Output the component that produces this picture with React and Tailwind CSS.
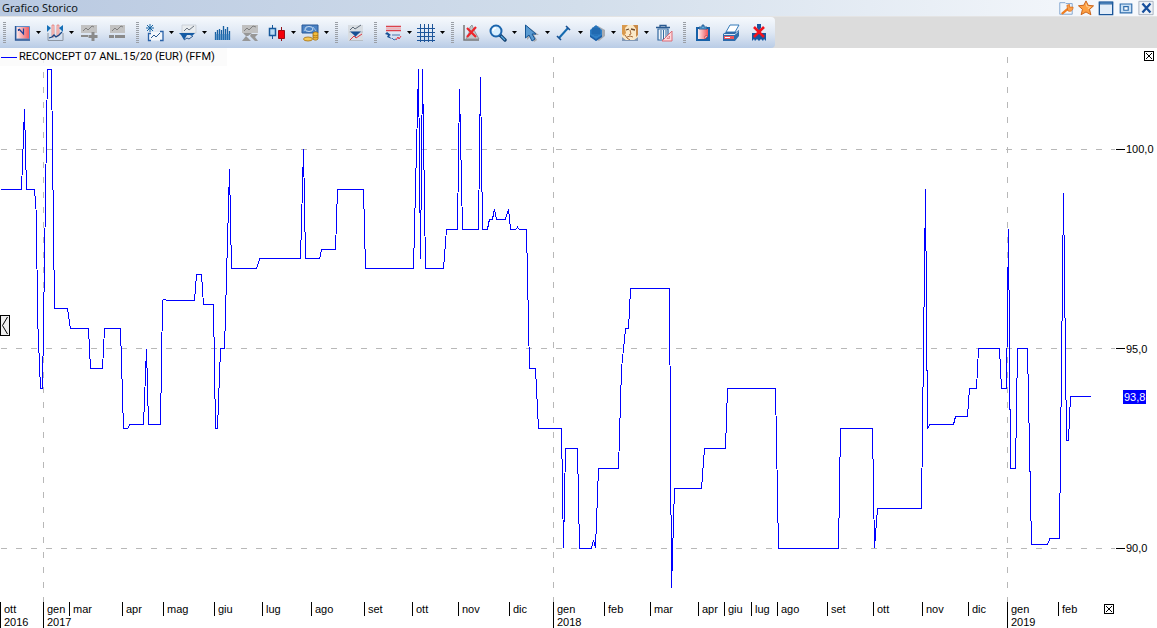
import { clsx } from 'clsx';

const VIEW_W = 1157;
const VIEW_H = 580;
const AXIS_TOP = 554;

const pctX = (x) => `${(x / VIEW_W) * 100}%`;
const pctY = (y) => `${(y / VIEW_H) * 100}%`;
const priceY = (price) => 101.25 + (100 - price) * 39.9;

// [position on the time axis, price]
const quotes = [
  [1, 99], [21.5, 99], [24.5, 101], [26.5, 99], [34.5, 99], [36, 98.5], [38, 95.5], [40.5, 94], [42.5, 94],
  [47.5, 102], [51.5, 102], [54.5, 96], [67.5, 96], [70.5, 95.5], [88.5, 95.5], [90.5, 94.5], [102.5, 94.5],
  [104.5, 95.5], [120.5, 95.5], [123.5, 93], [127.5, 93], [130, 93.1], [143.5, 93.1], [146.5, 95],
  [148.5, 93.1], [160.5, 93.1], [162.5, 96.2], [164, 96.25], [167, 96.2], [194.5, 96.2], [196.5, 96.87],
  [201.5, 96.87], [203.5, 96.1], [213.5, 96.1], [215.5, 93], [217.5, 93], [220.5, 95], [224.5, 95],
  [229.5, 99.5], [231.5, 97], [256.5, 97], [259.5, 97.25], [300.5, 97.25], [303.5, 100], [305.5, 97.25],
  [319.5, 97.25], [321.5, 97.48], [335.5, 97.48], [337.5, 99], [363.5, 99], [365.5, 97], [413.5, 97],
  [418.5, 102], [420.5, 97.25], [422.5, 102], [425.5, 97], [443.5, 97], [446.5, 98], [457.5, 98],
  [459.5, 101.5], [462.5, 98], [478.5, 98], [480.5, 101.8], [482.5, 98], [487.5, 98], [489.5, 98.25],
  [492.5, 98.25], [494.5, 98.5], [496.5, 98.25], [505.5, 98.25], [508.5, 98.5], [510.5, 98], [516, 98],
  [517.5, 98.05], [519, 98], [526.5, 98], [529.5, 94.5], [535.5, 94.5], [538.5, 93], [561.5, 93],
  [563.5, 90], [565.5, 92.5], [577.5, 92.5], [579.5, 90], [591.5, 90], [593.5, 90.2], [595.5, 90],
  [598.5, 92], [618.5, 92], [621.5, 94.5], [625.5, 95.5], [628.5, 95.5], [630.5, 96.5], [669.5, 96.5],
  [671.5, 89], [674.5, 91.5], [701.5, 91.5], [704.5, 92.5], [725.5, 92.5], [727.5, 94], [775.5, 94],
  [778.5, 90], [838.5, 90], [840.5, 93], [872.5, 93], [874.5, 90], [877.5, 91], [921.5, 91], [925.5, 99],
  [927.5, 93], [930, 93.1], [953.5, 93.1], [955.5, 93.3], [967.5, 93.3], [969.5, 94], [976.5, 94],
  [978.5, 95], [999.5, 95], [1001.5, 94], [1006.5, 94], [1008.5, 98], [1010.5, 92], [1015.5, 92],
  [1017.5, 95], [1027.5, 95], [1031.5, 90.1], [1047.5, 90.1], [1050, 90.25], [1059.5, 90.25],
  [1063.5, 98.9], [1066.5, 92.7], [1068.5, 92.7], [1070.5, 93.8], [1091, 93.8],
];

const months = [
  { x: 0, label: 'ott', year: '2016' },
  { x: 43, label: 'gen', year: '2017', grid: true },
  { x: 69, label: 'mar' },
  { x: 122, label: 'apr' },
  { x: 163, label: 'mag' },
  { x: 214, label: 'giu' },
  { x: 262, label: 'lug' },
  { x: 311, label: 'ago' },
  { x: 364, label: 'set' },
  { x: 412, label: 'ott' },
  { x: 458, label: 'nov' },
  { x: 509, label: 'dic' },
  { x: 553, label: 'gen', year: '2018', grid: true },
  { x: 604, label: 'feb' },
  { x: 650, label: 'mar' },
  { x: 698, label: 'apr' },
  { x: 724, label: 'giu' },
  { x: 751, label: 'lug' },
  { x: 777, label: 'ago' },
  { x: 827, label: 'set' },
  { x: 873, label: 'ott' },
  { x: 922, label: 'nov' },
  { x: 968, label: 'dic' },
  { x: 1007, label: 'gen', year: '2019', grid: true },
  { x: 1058, label: 'feb' },
];

const levels = [
  { price: 100, label: '100,0' },
  { price: 95, label: '95,0' },
  { price: 90, label: '90,0' },
];

function Icon({ children, size = 'w-[18px] h-[18px]' }) {
  return (
    <svg viewBox="0 0 18 18" className={clsx('flex-shrink-0', size)} fill="none" aria-hidden="true">
      {children}
    </svg>
  );
}

const icons = {
  chartType: (
    <Icon>
      <defs>
        <linearGradient id="redSide" x1="0" x2="1" y1="0" y2="0">
          <stop offset="0" stopColor="#fdeeee" />
          <stop offset="1" stopColor="#f0555a" />
        </linearGradient>
      </defs>
      <path d="M3 2.500h13.500v12.500H3z" fill="url(#redSide)" stroke="#5d8cc8" />
      <path d="M2.500 2v14H17" stroke="#2a5594" strokeWidth="1.3" />
      <path d="M5.500 5v2M6 5l4.500 5V4.500" stroke="#1b3f96" strokeWidth="1.2" />
    </Icon>
  ),
  compress: (
    <Icon>
      <path d="M6 1h2v12H6zM11 1h2v11h-2z" fill="#fbd3d0" stroke="#e0716e" strokeWidth=".7" />
      <path d="M1 1l4 3-4 4zM17 1l-4 3 4 4z" fill="#1670b8" />
      <path d="M2 9v7.500h15V9" stroke="#8d96a2" />
      <path d="M3 14l3-1 2-2 2 2 3-2 3-3" stroke="#174786" strokeWidth="1.3" />
    </Icon>
  ),
  addIndicator: (
    <Icon>
      <path d="M1 1h16v8H1z" fill="#c2c2c2" />
      <path d="M3 7l3-3 2 2 4-4 2 1" stroke="#808080" />
      <path d="M1 11h7v2H1zM11.500 8h3v3h3v3h-3v3h-3v-3h-3v-3h3z" fill="#8a8a8a" />
    </Icon>
  ),
  removeIndicator: (
    <Icon>
      <path d="M2 1h15v8H2z" fill="#c2c2c2" />
      <path d="M4 7l3-3 2 2 4-4 2 1" stroke="#808080" />
      <path d="M1 11h5v3H1zM7 11h10v3H7z" fill="#8a8a8a" />
    </Icon>
  ),
  newChart: (
    <Icon>
      <path d="M4 0v8M0 4h8M1 1l6 6M7 1L1 7" stroke="#1564a5" />
      <path d="M3 8h14v8.500H3z" fill="#f2f6fb" />
      <path d="M5 9.500H2.500v7H5M14 7.500h3v9h-3" stroke="#2a62a8" strokeWidth="1.3" />
      <path d="M5 14l3-3 2 2 4-4" stroke="#27568f" />
    </Icon>
  ),
  replaceChart: (
    <Icon>
      <path d="M3 1h14v8H3z" fill="#e8ecef" stroke="#c2c9d1" strokeWidth=".7" />
      <path d="M5 7l3-3 2 2 5-4" stroke="#6c7682" />
      <path d="M0 9h16l-3 3-2-1H8l-3 5-3-5z" fill="#155ba4" />
      <path d="M5 16l3-2 2 1 4-3" stroke="#27568f" />
    </Icon>
  ),
  volume: (
    <Icon>
      <path
        d="M2.500 16V8M4.500 16V6M6.500 16V5M8.500 16V6M10.500 16V2M12.500 16V5M14.500 16V3M16.500 16V7"
        stroke="#1760a2"
        strokeWidth="1.3"
      />
      <path d="M2 16V10h15v6z" fill="#2c78ba" opacity=".5" />
    </Icon>
  ),
  swap: (
    <Icon>
      <path d="M1 1h16v8H1z" fill="#c0c0c0" />
      <path d="M3 7l3-3 2 2 4-4 3 1" stroke="#808080" />
      <path d="M2 9h9l-4 3H5zM1 17l4-5 5 5zM10 10h7l-3 3 3 4h-3l-5-5z" fill="#979797" />
    </Icon>
  ),
  candles: (
    <Icon>
      <path d="M4.500 1v14" stroke="#17599c" />
      <path d="M1.500 4.500h6v7h-6z" fill="#b9dbf4" stroke="#17599c" strokeWidth="1.5" />
      <path d="M13.500 3v14" stroke="#8f1018" />
      <path d="M10.500 6.500h6v8h-6z" fill="#f40009" stroke="#980f15" />
    </Icon>
  ),
  currency: (
    <Icon>
      <path d="M1 1h16v8H1z" fill="#4a82c4" stroke="#2a5a9a" />
      <ellipse cx="8" cy="5" rx="4" ry="2.5" stroke="#c6dcf4" />
      <path d="M3 7l3-4M12 3l3 4" stroke="#a2c3e5" />
      <path d="M12 9c1-1.500 4-1.500 5 0v6c-1 1.500-4 1.500-5 0z" fill="#f3bd3d" stroke="#a56f12" strokeWidth=".8" />
      <path d="M12 11c1 1 4 1 5 0M12 13c1 1 4 1 5 0" stroke="#a56f12" strokeWidth=".8" />
      <ellipse cx="7" cy="15" rx="4.500" ry="2" fill="#f5c958" stroke="#a56f12" strokeWidth=".8" />
    </Icon>
  ),
  compare: (
    <Icon>
      <path d="M2 1h15v16H2z" fill="#d8dde2" />
      <path d="M3 8h14M3 16.500h14" stroke="#aeb5bd" strokeWidth=".8" />
      <path d="M4 6l3-3 2 2 6-4" stroke="#5d6a78" />
      <path d="M4 7.500h11L11 11l-1.500 2L8 11z" fill="#174f94" />
      <path d="M4 16l4-4 2 2 6-4" stroke="#df3440" />
    </Icon>
  ),
  studies: (
    <Icon>
      <path d="M2 2.500h15M2 6.500h15" stroke="#db424b" strokeWidth="1.3" />
      <path d="M2 4.500h15" stroke="#f3b4b6" />
      <path d="M3 8l4 3-2 1 3 3-5-2 1-2-3-1z" fill="#174f94" />
      <path d="M8 11h8" stroke="#4f79ad" />
      <path d="M8 14l2 2 2-1" stroke="#3971ae" />
      <path d="M12 16l2-3 1 2 2-3" stroke="#e43742" />
    </Icon>
  ),
  grid: (
    <Icon>
      <path
        d="M0 4.500h18M0 8.500h18M0 12.500h18M0 16.500h18M3.500 0v18M7.500 0v18M11.500 0v18M15.500 0v18"
        stroke="#1d559a"
        shapeRendering="crispEdges"
      />
    </Icon>
  ),
  clearTools: (
    <Icon>
      <path d="M2 1v15h15" stroke="#777" strokeWidth="1.5" />
      <path d="M4 15l3-6 1-6 2-2 2 5 5 9z" fill="#c4c7ca" stroke="#85898c" strokeWidth=".8" />
      <path d="M5 4l9 9M14 3l-9 10" stroke="#ed252a" strokeWidth="2.2" />
    </Icon>
  ),
  zoom: (
    <Icon>
      <path d="M11 11l5 5" stroke="#12406f" strokeWidth="3.400" strokeLinecap="round" />
      <path d="M12 12l4 4" stroke="#56a9e1" strokeWidth="1.2" />
      <circle cx="7" cy="7" r="5.5" fill="#d7efff" stroke="#1b65ad" strokeWidth="2" />
      <path d="M4 7c0-2 1-3 3-3" stroke="#fff" strokeWidth="1.5" />
    </Icon>
  ),
  cursor: (
    <Icon>
      <path d="M5 2v14l4-4 3 6 3-2-3-5h5z" fill="#a6a8ad" />
      <path d="M3.500 1v13l3.500-3 3 6 3-2-3-5h4z" fill="#5a9bd2" stroke="#165594" />
    </Icon>
  ),
  trendLine: (
    <Icon>
      <path d="M4 14L13 4" stroke="#146ab0" strokeWidth="2" />
      <path d="M2 12l4 4M11 2l4 4" stroke="#174f91" strokeWidth="1.6" />
    </Icon>
  ),
  shape: (
    <Icon>
      <path d="M10 2l7 4v6l-6 5-5-2z" fill="#a7abb1" />
      <path d="M8 1l6 5v6l-6 5-6-5V6z" fill="#2f7fc6" />
      <path d="M2 11l6 4 6-4v2l-6 4-6-4z" fill="#1b5fa8" />
      <path d="M4 5h8M3 7h10M3 9h10M5 3v8M7 2v10M9 2v10M11 4v7" stroke="#15599f" strokeWidth=".6" />
    </Icon>
  ),
  portrait: (
    <Icon>
      <path d="M1 1h16v15H1z" fill="#fbe9c8" />
      <path d="M1 1h6L4 4l1 5-2 3-2-2z" fill="#d99a4e" />
      <path d="M12 1h5v10l-2 2 0-8z" fill="#c98a48" />
      <path d="M5 6l3-1M10 5l4 1" stroke="#6b4a2e" strokeWidth="1.3" />
      <path d="M9 6l1 4-2 1M6 13l3-1 3 1M4 11l2 3 3 2" stroke="#a86c3a" />
      <path d="M1 17v-4l5 4zM17 17v-4l-5 4z" fill="#8298b5" />
      <path d="M1 16.500h16" stroke="#8298b5" />
    </Icon>
  ),
  trash: (
    <Icon>
      <path d="M1 3.500h14M5 3V1.500h6V3" stroke="#29598f" strokeWidth="1.3" />
      <path d="M3 5h10v11H3z" fill="#edf3fa" stroke="#33689f" strokeWidth="1.2" />
      <path d="M6 6v9M8.500 6v9M11 6v9" stroke="#33689f" />
      <path d="M7 17h10V7z" fill="#ffd9dc" stroke="#dc6d78" />
      <path d="M12 14.500h2.500V12z" fill="#fff" stroke="#dc6d78" strokeWidth=".8" />
    </Icon>
  ),
  clipboard: (
    <Icon>
      <path d="M2 3h14v14H2z" fill="#1761a8" />
      <path d="M4 5h10v7l-3 3H4z" fill="url(#redSide)" />
      <path d="M5 5V3h3V1h2v2h3v2z" fill="#5fabde" stroke="#174e88" strokeWidth=".8" />
      <path d="M11 15v-3h3z" fill="#fff" stroke="#bd3c49" strokeWidth=".8" />
    </Icon>
  ),
  print: (
    <Icon>
      <path d="M4 8l4-7h9l-4 7z" fill="#fff" stroke="#357bb9" />
      <path d="M1 10l3-2h10l3-2v6l-4 5H1z" fill="#2f6cab" />
      <path d="M2 10.500h11l3-3" stroke="#d6e8f8" />
      <path d="M2 12h10v3H2z" fill="#f0555a" />
      <path d="M3 13.500h5" stroke="#fff" />
    </Icon>
  ),
  removeAll: (
    <Icon>
      <path d="M7 0h4v4l-2 3-2-3zM2 9h14v8l-2-2-1 2-2-2-2 2-2-2-2 2-1-2-2 2z" fill="#1657a0" />
      <path d="M4 3l10 10M14 3L4 13" stroke="#f3131d" strokeWidth="2.6" />
    </Icon>
  ),
};

const toolGroups = [
  [
    { icon: 'chartType', label: 'Tipo di grafico', menu: true },
    { icon: 'compress', label: 'Periodo', menu: true },
    { icon: 'addIndicator', label: 'Aggiungi' },
    { icon: 'removeIndicator', label: 'Rimuovi' },
  ],
  [
    { icon: 'newChart', label: 'Nuovo grafico', menu: true },
    { icon: 'replaceChart', label: 'Sostituisci', menu: true },
    { icon: 'volume', label: 'Volumi' },
    { icon: 'swap', label: 'Scambia' },
    { icon: 'candles', label: 'Candele', menu: true },
    { icon: 'currency', label: 'Valuta', menu: true },
  ],
  [{ icon: 'compare', label: 'Confronta' }],
  [
    { icon: 'studies', label: 'Studi', menu: true },
    { icon: 'grid', label: 'Griglia', menu: true },
  ],
  [
    { icon: 'clearTools', label: 'Azzera' },
    { icon: 'zoom', label: 'Zoom', menu: true },
    { icon: 'cursor', label: 'Cursore', menu: true },
    { icon: 'trendLine', label: 'Linea', menu: true },
    { icon: 'shape', label: 'Forme', menu: true },
    { icon: 'portrait', label: 'Fibonacci', menu: true },
    { icon: 'trash', label: 'Cancella' },
  ],
  [
    { icon: 'clipboard', label: 'Copia' },
    { icon: 'print', label: 'Stampa' },
    { icon: 'removeAll', label: 'Elimina tutto' },
  ],
];

function ToolButton({ icon, label, menu }) {
  return (
    <button
      type="button"
      aria-label={label}
      aria-haspopup={menu ? 'menu' : undefined}
      className={clsx('flex h-full items-center', menu ? 'w-[33px] gap-[5px] pl-1' : 'w-7 justify-center')}
    >
      {icons[icon]}
      {menu && (
        <svg viewBox="0 0 5 3" className="h-[3px] w-[5px] flex-shrink-0" aria-hidden="true">
          <path d="M0 0h5L2.500 3z" fill="#000" />
        </svg>
      )}
    </button>
  );
}

function Grip() {
  return (
    <svg viewBox="0 0 3 22" className="mr-[3px] h-[22px] w-[3px]" shapeRendering="crispEdges" aria-hidden="true">
      <path d="M1.500 0v22" stroke="#9a9fa6" strokeWidth="3" strokeDasharray="1 1" />
    </svg>
  );
}

function Toolbar() {
  return (
    <div role="toolbar" aria-label="Strumenti grafico" className="flex h-8 flex-shrink-0 border-t border-[#e4e4e4] bg-[#dcdcdc]">
      {toolGroups.map((group, i) => (
        <div
          key={i}
          className={clsx(
            'flex items-center bg-linear-to-b from-[#f6f9fd] via-[#dfe8f4] to-[#b9cce6] pr-0.5 pl-[3px]',
            i === toolGroups.length - 1 && 'rounded-r-sm',
          )}
        >
          <Grip />
          <div className="flex h-full">
            {group.map((tool) => (
              <ToolButton key={tool.icon} {...tool} />
            ))}
          </div>
        </div>
      ))}
    </div>
  );
}

function TitleBar() {
  return (
    <header className="flex h-4 flex-shrink-0 items-center justify-between bg-linear-to-r from-[#b9c9e1] via-[#d2deeb] via-50% to-[#f8fafd] pr-[3px] pl-0.5">
      <h1 className="text-[11px] leading-4 text-[#101820]">Grafico Storico</h1>
      <div className="flex gap-1">
        <button type="button" aria-label="Impostazioni">
          <Icon size="w-4 h-4">
            <path d="M2 3h6l1 1h7v12H2z" fill="#f1f6fc" stroke="#7ca0cc" />
            <path d="M5 15l6-5" stroke="#ef7f22" strokeWidth="2.6" strokeLinecap="round" />
            <path d="M10 6l3-1v3h4c0 4-3 6-6 4z" fill="#f9a04a" stroke="#d86514" strokeWidth=".8" />
          </Icon>
        </button>
        <button type="button" aria-label="Preferiti">
          <Icon size="w-4 h-4">
            <path d="M9 1l2.500 5 6 .6-4.500 4 1.500 6L9 13.500l-5.500 3 1.500-6-4.500-4 6-.6z" fill="#fda043" stroke="#c6590e" />
            <path d="M9 4l1 3.500 4 .5-3 2" stroke="#ffd5a0" />
          </Icon>
        </button>
        <button type="button" aria-label="Ingrandisci">
          <Icon size="w-4 h-4">
            <path d="M1.500 2.500h15v14h-15z" fill="#e3edf8" stroke="#1b5699" strokeWidth="1.5" />
            <path d="M1 2h16v3H1z" fill="#215e9f" />
            <path d="M2.500 3.500h13" stroke="#6c9dcc" />
          </Icon>
        </button>
        <button type="button" aria-label="Ripristina">
          <Icon size="w-4 h-4">
            <path d="M2.500 4.500h13v10h-13z" fill="#c9e0f5" stroke="#2e6cab" strokeWidth="1.3" />
            <path d="M6.500 7.500h5v4h-5z" fill="#fff" stroke="#2e6cab" strokeWidth="1.3" />
          </Icon>
        </button>
        <button type="button" aria-label="Chiudi">
          <Icon size="w-4 h-4">
            <path d="M1 1.500h16v15H1z" fill="#eef2f7" stroke="#a3adba" />
            <path d="M5 4l9 10M14 4l-9 10" stroke="#174f9d" strokeWidth="2.6" />
          </Icon>
        </button>
      </div>
    </header>
  );
}

function CrossBox() {
  return (
    <svg viewBox="0 0 10 10" className="block h-2.5 w-2.5" shapeRendering="crispEdges" aria-hidden="true">
      <path d="M.5.5h9v9h-9z" fill="#fff" stroke="#000" />
      <path d="M2 2l6 6M8 2l-6 6" stroke="#000" />
    </svg>
  );
}

function PriceChart() {
  const points = quotes.map(([x, price]) => `${x},${priceY(price)}`).join(' ');

  return (
    <svg
      className="block h-full w-full text-[11px]"
      role="img"
      aria-label="Andamento storico del prezzo"
      shapeRendering="crispEdges"
    >
      {months.filter((m) => m.grid).map((m) => (
        <line
          key={m.x}
          x1={pctX(m.x + 0.5)}
          x2={pctX(m.x + 0.5)}
          y1="0"
          y2={pctY(AXIS_TOP)}
          stroke="#b8b8b8"
          strokeDasharray="6 9"
          strokeDashoffset="6"
        />
      ))}
      {levels.map(({ price, label }) => (
        <g key={label}>
          <line
            x1="0"
            x2={pctX(1115)}
            y1={pctY(priceY(price))}
            y2={pctY(priceY(price))}
            stroke="#b8b8b8"
            strokeDasharray="6 9"
            strokeDashoffset="-1"
          />
          <svg x={pctX(1116)} y={pctY(priceY(price))} className="overflow-visible">
            <path d="M0 0h9" stroke="#000" />
            <text x="10" y="4">{label}</text>
          </svg>
        </g>
      ))}

      <svg width="100%" height="100%" viewBox={`0 0 ${VIEW_W} ${VIEW_H}`} preserveAspectRatio="none">
        <polyline points={points} fill="none" stroke="#0000ff" vectorEffect="non-scaling-stroke" />
      </svg>

      <svg x={pctX(1123)} y={pctY(priceY(93.8))} className="overflow-visible">
        <rect y="-7" width="23" height="14" fill="#0000ff" />
        <text x="1" y="4" fill="#fff">93,8</text>
      </svg>

      {months.map((m) => (
        <svg key={m.x} x={pctX(m.x)} y={pctY(AXIS_TOP)} className="overflow-visible">
          <path d={m.year ? 'M.5 0v26' : 'M.5 0v14'} stroke="#000" />
          <text x="4" y="11">{m.label}</text>
          {m.year && <text x="4" y="24">{m.year}</text>}
        </svg>
      ))}
    </svg>
  );
}

export default function App() {
  return (
    <div className="flex h-screen flex-col overflow-hidden bg-white font-['Noto_Sans',sans-serif] text-black">
      <TitleBar />
      <Toolbar />
      <main className="relative min-h-0 flex-1 font-['Liberation_Sans',sans-serif]">
        <PriceChart />
        <div className="absolute top-0 left-0 flex h-[18px] items-center gap-0.5 bg-[#fafafa]/80 pr-3 pl-px font-['Roboto',sans-serif] text-[11px]">
          <span className="h-px w-4 bg-[#0000ff]" />
          RECONCEPT 07 ANL.15/20 (EUR) (FFM)
        </div>
        <button type="button" aria-label="Chiudi grafico" className="absolute top-[3px] right-[3px]">
          <CrossBox />
        </button>
        <button type="button" aria-label="Chiudi asse" className="absolute right-[43px] bottom-[14px]">
          <CrossBox />
        </button>
        <button
          type="button"
          aria-label="Mostra pannello"
          className="absolute top-[46%] left-0 flex h-[21px] w-2.5 items-center justify-center border border-black bg-[#f0f0f0]"
        >
          <svg viewBox="0 0 6 17" className="h-[17px] w-1.5 flex-shrink-0" fill="none" aria-hidden="true">
            <path d="M5.500 0L.5 8.500l5 8.500" stroke="#000" />
          </svg>
        </button>
      </main>
    </div>
  );
}
